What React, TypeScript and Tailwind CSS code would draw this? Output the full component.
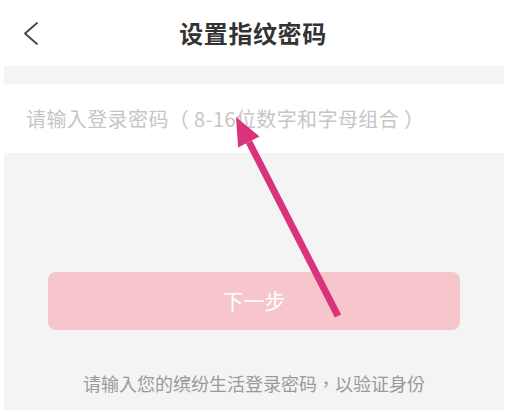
const App = () => {
  return (
    <div
      className="relative w-[506px] h-[412px] overflow-hidden bg-white"
      style={{ fontFamily: '"Noto Sans CJK SC", "Noto Sans", sans-serif' }}
    >
      {/* Header */}
      <div className="relative flex h-[66px] items-center justify-center">
        <svg
          className="absolute left-[20px] top-[18px]"
          width="24"
          height="32"
          viewBox="0 0 24 32"
          fill="none"
        >
          <polyline
            points="17,5 5,15.5 17,26"
            stroke="#444"
            strokeWidth="1.8"
            strokeLinecap="round"
            strokeLinejoin="round"
          />
        </svg>
        <h1 className="text-[24px] font-bold leading-none text-[#333] tracking-[0.6px]">
          设置指纹密码
        </h1>
      </div>

      {/* Panel */}
      <div className="ml-[4px] mr-[2px] h-[344px] bg-[#f4f4f4] pt-[18px]">
        <div className="flex h-[69px] items-center bg-white pl-[22px]">
          <span className="whitespace-pre font-['Noto_Sans_CJK_TC','Noto_Sans_CJK_SC',sans-serif] text-[20px] tracking-[0.4px] text-[#c6c6c6] [text-spacing-trim:space-all]">
            请输入登录密码（ 8-16位数字和字母组合 ）
          </span>
        </div>

        <div className="flex flex-col items-center pt-[119px]">
          <button className="h-[58px] w-[412px] rounded-[8px] bg-[#f7c6cc] text-[21px] text-white">
            下一步
          </button>
          <p className="mt-[41px] font-['Noto_Sans_CJK_TC','Noto_Sans_CJK_SC',sans-serif] text-[18px] leading-[24px] text-[#9a9a9a] [text-spacing-trim:space-all]">
            请输入您的缤纷生活登录密码，以验证身份
          </p>
        </div>
      </div>

      {/* Annotation arrow */}
      <svg
        className="pointer-events-none absolute left-0 top-0"
        width="506"
        height="412"
        viewBox="0 0 506 412"
      >
        <line
          x1="338"
          y1="316"
          x2="249"
          y2="142"
          stroke="#d9337b"
          strokeWidth="7"
        />
        <polygon points="236,117 259.5,136.4 238.1,147.4" fill="#d9337b" />
      </svg>
    </div>
  );
};

export default App;
